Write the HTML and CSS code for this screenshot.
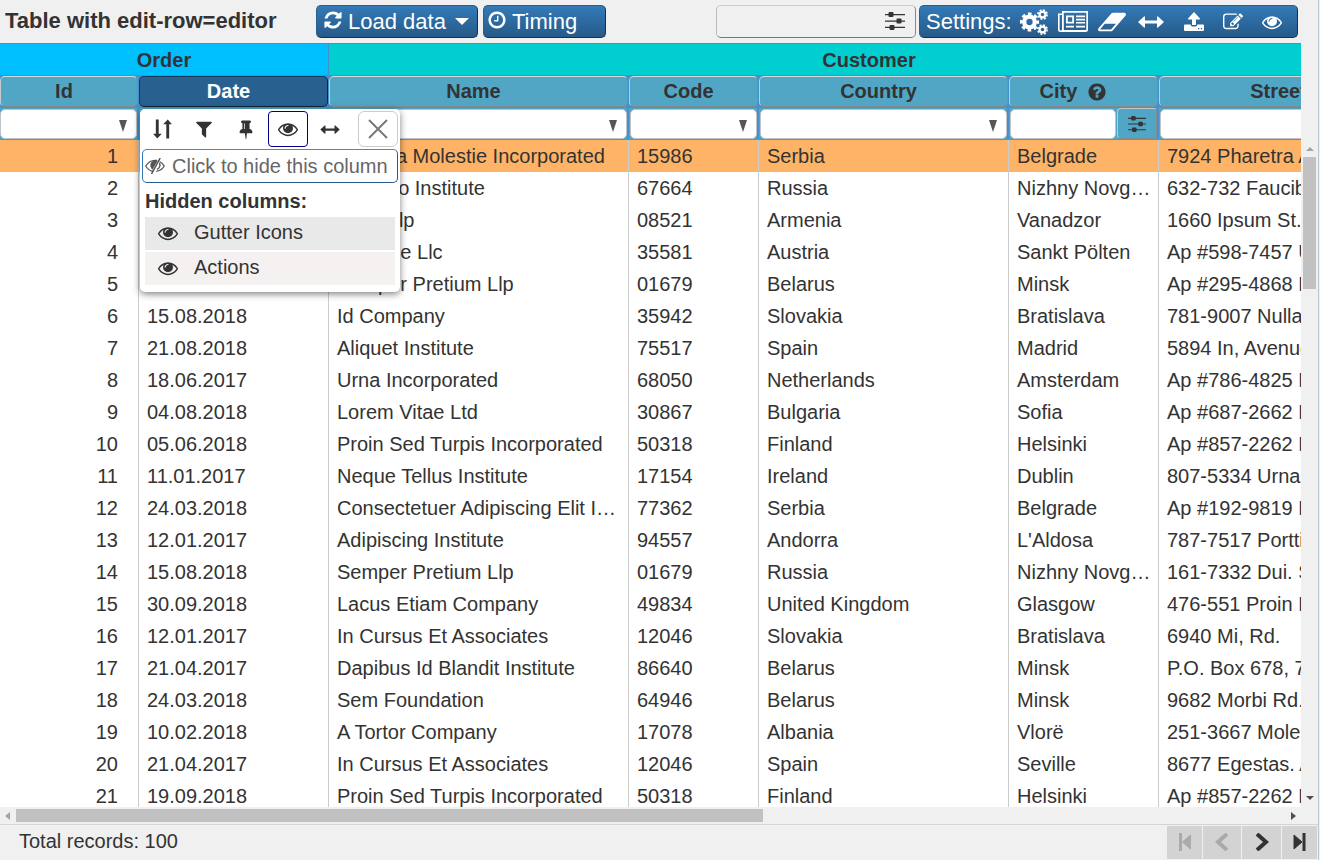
FILE: index.html
```html
<!DOCTYPE html>
<html lang="en">
<head>
<meta charset="utf-8">
<title>Table with edit-row=editor</title>
<link rel="stylesheet" href="styles.css">
</head>
<body>
<svg class="defs" aria-hidden="true">
  <symbol id="refresh" viewBox="0 0 1792 1792"><path d="M1639 1056q0 5-1 7-64 268-268 434.5t-478 166.5q-146 0-282.5-55t-243.5-157l-129 129q-19 19-45 19t-45-19-19-45v-448q0-26 19-45t45-19h448q26 0 45 19t19 45-19 45l-137 137q71 66 161 102t187 36q134 0 250-65t186-179q11-17 53-117 8-23 30-23h192q13 0 22.500 9.500t9.500 22.500zm25-800v448q0 26-19 45t-45 19h-448q-26 0-45-19t-19-45 19-45l138-138q-148-137-349-137-134 0-250 65t-186 179q-11 17-53 117-8 23-30 23h-199q-13 0-22.500-9.500t-9.500-22.500v-7q65-268 270-434.500t480-166.500q146 0 284 55.500t245 156.500l130-129q19-19 45-19t45 19 19 45z"/></symbol>
  <symbol id="clock" viewBox="0 0 1792 1792"><path d="M1024 544v448q0 14-9 23t-23 9h-320q-14 0-23-9t-9-23v-64q0-14 9-23t23-9h224v-352q0-14 9-23t23-9h64q14 0 23 9t9 23zm416 352q0-148-73-273t-198-198-273-73-273 73-198 198-73 273 73 273 198 198 273 73 273-73 198-198 73-273zm224 0q0 209-103 385.500t-279.500 279.500-385.500 103-385.500-103-279.500-279.500-103-385.500 103-385.500 279.500-279.500 385.500-103 385.500 103 279.500 279.500 103 385.500z"/></symbol>
  <symbol id="eye" viewBox="0 0 1792 1792"><path d="M1664 960q-152-236-381-353 61 104 61 225 0 185-131.500 316.500t-316.500 131.500-316.500-131.500-131.500-316.500q0-121 61-225-229 117-381 353 133 205 333.500 326.500t434.500 121.500 434.500-121.500 333.500-326.500zm-720-384q0-20-14-34t-34-14q-125 0-214.500 89.500t-89.500 214.500q0 20 14 34t34 14 34-14 14-34q0-86 61-147t147-61q20 0 34-14t14-34zm848 384q0 34-20 69-140 230-376.500 368.500t-499.500 138.500-499.500-139-376.500-368q-20-35-20-69t20-69q140-229 376.500-368t499.500-139 499.500 139 376.500 368q20 35 20 69z"/></symbol>
  <symbol id="edit" viewBox="0 0 1792 1792"><path d="M888 1184l116-116-152-152-116 116v56h96v96h56zm440-720q-16-16-33 1l-350 350q-17 17-1 33t33-1l350-350q17-17 1-33zm80 594v190q0 119-84.500 203.500t-203.500 84.500h-832q-119 0-203.500-84.500t-84.500-203.500v-832q0-119 84.500-203.500t203.500-84.500h832q63 0 117 25 15 7 18 23 3 17-9 29l-49 49q-14 14-32 8-23-6-45-6h-832q-66 0-113 47t-47 113v832q0 66 47 113t113 47h832q66 0 113-47t47-113v-126q0-13 9-22l64-64q15-15 35-7t20 29zm-96-738l288 288-672 672h-288v-288zm444 132l-92 92-288-288 92-92q28-28 68-28t68 28l152 152q28 28 28 68t-28 68z"/></symbol>
  <symbol id="eraser" viewBox="0 0 1920 1792"><path d="M896 1408l336-384h-768l-336 384h768zm1013-1077q15 34 9.500 71.500t-30.500 65.500l-896 1024q-38 44-96 44h-768q-38 0-69.500-20.500t-47.500-54.500q-15-34-9.500-71.500t30.500-65.500l896-1024q38-44 96-44h768q38 0 69.500 20.500t47.500 54.500z"/></symbol>
  <symbol id="filter" viewBox="0 0 1792 1792"><path d="M1595 295q17 41-14 70l-493 493v742q0 42-39 59-13 5-25 5-27 0-45-19l-256-256q-19-19-19-45v-486l-493-493q-31-29-14-70 17-39 59-39h1280q42 0 59 39z"/></symbol>
  <symbol id="pin" viewBox="0 0 1792 1792"><path d="M800 864v-448q0-14-9-23t-23-9-23 9-9 23v448q0 14 9 23t23 9 23-9 9-23zm672 352q0 26-19 45t-45 19h-429l-51 483q-2 12-10.500 20.500t-20.500 8.500h-1q-27 0-32-27l-76-485h-404q-26 0-45-19t-19-45q0-123 78.500-221.500t177.500-98.500v-512q-52 0-90-38t-38-90 38-90 90-38h640q52 0 90 38t38 90-38 90-90 38v512q99 0 177.500 98.500t78.500 221.500z"/></symbol>
  <symbol id="help" viewBox="0 0 1792 1792"><path d="M1024 1376v-192q0-14-9-23t-23-9h-192q-14 0-23 9t-9 23v192q0 14 9 23t23 9h192q14 0 23-9t9-23zm256-672q0-88-55.500-163t-138.500-116-170-41q-243 0-371 213-15 24 8 42l132 100q7 6 19 6 16 0 25-12 53-68 86-92 34-24 86-24 48 0 85.500 26t37.500 59q0 38-20 61t-68 45q-63 28-115.500 86.500t-52.500 125.500v36q0 14 9 23t23 9h192q14 0 23-9t9-23q0-19 21.500-49.500t54.500-49.500q32-18 49-28.500t46-35 44.500-48 28-60.500 12.500-81zm384 192q0 209-103 385.500t-279.500 279.500-385.500 103-385.500-103-279.500-279.500-103-385.500 103-385.500 279.500-279.500 385.500-103 385.500 103 279.500 279.500 103 385.500z"/></symbol>
  <symbol id="arrows" viewBox="0 0 26 12"><path d="M0 6l6-5.500q1-.5 1 .7v3.300h12v-3.300q0-1.200 1-.7l6 5.500-6 5.500q-1 .5-1-.7v-3.300h-12v3.300q0 1.200-1 .7z"/></symbol>
  <symbol id="cogs" viewBox="0 0 28 26">
    <g fill="none" stroke="currentColor"><circle cx="9.500" cy="13" r="5.300" stroke-width="4.300"/><circle cx="9.500" cy="13" r="8.300" stroke-width="2.600" stroke-dasharray="3.600 2.919" stroke-dashoffset="1.800"/>
    <circle cx="22.500" cy="5.500" r="2.900" stroke-width="2.200"/><circle cx="22.500" cy="5.500" r="4.600" stroke-width="1.600" stroke-dasharray="2 1.613"/>
    <circle cx="22.500" cy="20.500" r="2.900" stroke-width="2.200"/><circle cx="22.500" cy="20.500" r="4.600" stroke-width="1.600" stroke-dasharray="2 1.613"/></g>
  </symbol>
  <symbol id="news" viewBox="0 0 30 21"><path fill-rule="evenodd" d="M4 0h26v18.500q0 2.500-2.500 2.500h-25q-2.500 0-2.500-2.500v-16h4zM5.800 1.700v17.300h22.500v-17.300zM1.600 4v14.500q0 1 1.200 1t1.200-1v-14.500zM8 4.500h8v8h-8zM9.800 6.300v4.400h4.400v-4.400zM18 4.500h9v1.700h-9zM18 7.700h9v1.700h-9zM18 10.900h9v1.700h-9zM8 14.800h8v1.700h-8zM18 14.800h9v1.700h-9z"/></symbol>
  <symbol id="upload" viewBox="0 0 20 19"><path fill-rule="evenodd" d="M10 0l6 6.500q.5 1-.8 1h-3.200v5.500h-4v-5.500h-3.200q-1.300 0-.8-1zM1 12.500h5.700q0 2 1.800 2h3q1.800 0 1.800-2h5.700q1 0 1 1v4.500q0 1-1 1h-18q-1 0-1-1v-4.500q0-1 1-1zM14 16h1.300v1.300h-1.300zM16.800 16h1.300v1.300h-1.300z"/></symbol>
  <symbol id="sliders" viewBox="0 0 20 18"><path d="M0 2h20v1.300h-20zM0 8.400h20v1.300h-20zM0 14.800h20v1.300h-20z"/><rect x="3.500" y="0" width="5" height="5" rx="1"/><rect x="11.500" y="6.500" width="5" height="5" rx="1"/><rect x="4.500" y="13" width="5" height="5" rx="1"/></symbol>
  <symbol id="sort" viewBox="0 0 20 20"><path d="M3 0h3v15h3.300l-4.800 5-4.500-5h3zM14 20h3v-15h3l-4.500-5-4.800 5h3.300z"/></symbol>
  <symbol id="eye-slash" viewBox="0 0 20 16"><g fill="none" stroke="currentColor" stroke-width="1.300"><path d="M8 13.300q-4.500-.8-7.300-5.300 3.600-5.700 9.300-5.700l2 .2M14.500 3.500q3 1.500 4.800 4.500-3 4.800-8 5.400"/><path d="M15.200 0l-8.700 16" stroke-width="1.500"/><path d="M14.500 5q1.700 4-2.500 6.500"/></g><path d="M12.700 2.600q-4-1-6.200 1.300-2.500 3.300.2 7l.8.800z"/></symbol>
  <symbol id="close" viewBox="0 0 20 20"><path d="M1 1l18 18M19 1l-18 18" stroke="currentColor" stroke-width="1.900" fill="none"/></symbol>
</svg>

<div class="app">
  <header class="toolbar">
    <h1 class="title">Table with edit-row=editor</h1>
    <button class="btn load"><svg class="i20"><use href="#refresh"/></svg><span>Load data</span><i class="caret"></i></button>
    <button class="btn timing"><svg class="i20"><use href="#clock"/></svg><span>Timing</span></button>
    <div class="search"><svg class="sliders"><use href="#sliders"/></svg></div>
    <div class="btn settings"><span>Settings:</span>
      <span class="tool"><svg class="cogs"><use href="#cogs"/></svg></span>
      <span class="tool"><svg class="news"><use href="#news"/></svg></span>
      <span class="tool"><svg class="eraser"><use href="#eraser"/></svg></span>
      <span class="tool"><svg class="arrows"><use href="#arrows"/></svg></span>
      <span class="tool up"><svg class="upload"><use href="#upload"/></svg></span>
      <span class="tool"><svg class="i20"><use href="#edit"/></svg></span>
      <span class="tool"><svg class="i20"><use href="#eye"/></svg></span>
    </div>
  </header>

  <main class="main">
    <section class="grid">
      <div class="groups"><div class="group order">Order</div><div class="group customer">Customer</div></div>
      <div class="row heads">
        <div class="hcell"><b>Id</b></div><div class="hcell active"><b>Date</b></div><div class="hcell"><b>Name</b></div><div class="hcell"><b>Code</b></div><div class="hcell"><b>Country</b></div><div class="hcell"><b>City</b><svg class="help"><use href="#help"/></svg></div><div class="hcell"><b>Street</b></div>
      </div>
      <div class="row filters">
        <div class="fcell"><div class="input"><i class="tri"></i></div></div><div class="fcell"><div class="input"></div></div><div class="fcell"><div class="input"><i class="tri"></i></div></div><div class="fcell"><div class="input"><i class="tri"></i></div></div><div class="fcell"><div class="input"><i class="tri"></i></div></div><div class="fcell"><div class="input"></div><div class="fbtn"><svg><use href="#sliders"/></svg></div></div><div class="fcell"><div class="input"></div></div>
      </div>
      <div class="body" id="body"></div>
    </section>
    <div class="vscroll"><i class="au"></i><div class="vthumb"></div><i class="ad"></i></div>
  </main>
  <div class="hscroll"><i class="al"></i><div class="hthumb"></div><i class="ar"></i></div>
  <footer class="footer">
    <span>Total records: 100</span>
    <nav class="pager">
      <button class="page off"><svg viewBox="0 0 16 18"><path d="M3.500 0v18" stroke-width="3"/><path d="M13.500 2v14l-8-7z" class="fill"/></svg></button>
      <button class="page off"><svg viewBox="0 0 16 18"><path d="M13 1l-9 8 9 8" stroke-width="4"/></svg></button>
      <button class="page"><svg viewBox="0 0 16 18"><path d="M3 1l9 8-9 8" stroke-width="4"/></svg></button>
      <button class="page"><svg viewBox="0 0 16 18"><path d="M12 0v18" stroke-width="3"/><path d="M2 2v14l8-7z" class="fill"/></svg></button>
    </nav>
  </footer>

  <div class="menu">
    <div class="tabs">
      <span class="tab"><svg class="sort"><use href="#sort"/></svg></span>
      <span class="tab"><svg class="i20"><use href="#filter"/></svg></span>
      <span class="tab"><svg class="i20"><use href="#pin"/></svg></span>
      <span class="tab on"><svg class="i20"><use href="#eye"/></svg></span>
      <span class="tab"><svg class="harrow"><use href="#arrows"/></svg></span>
      <span class="tab x"><svg class="close"><use href="#close"/></svg></span>
    </div>
    <div class="hide"><svg><use href="#eye-slash"/></svg><span>Click to hide this column</span></div>
    <div class="caption">Hidden columns:</div>
    <div class="item dark"><svg class="i20"><use href="#eye"/></svg><span>Gutter Icons</span></div>
    <div class="item"><svg class="i20"><use href="#eye"/></svg><span>Actions</span></div>
  </div>
</div>
<script src="app.js"></script>
</body>
</html>
```
FILE: styles.css
```css
* { box-sizing: border-box; }
body { margin: 0; background: #f0f0f0; color: #333; font: 20px "Liberation Sans", Arial, sans-serif; overflow: hidden; }
button { font: inherit; margin: 0; }
svg { display: block; fill: currentColor; flex: none; }
.defs { position: absolute; width: 0; height: 0; }
.app { position: relative; width: 1319px; height: 860px; display: flex; flex-direction: column; border-right: 1px solid #b9c6cf; }

.toolbar { height: 43px; display: flex; padding: 5px 0 5px 5px; }
.title { margin: 0; width: 311px; font-size: 22px; line-height: 31px; white-space: nowrap; }
.btn { height: 33px; display: flex; align-items: center; color: #fff; font-size: 22px; line-height: 31px; border: 1px solid; border-color: #285f90 #14304a #14304a #285f90; border-radius: 5px; background: linear-gradient(#337ab7, #265a88); white-space: nowrap; }
.load { width: 162px; padding: 0 6px; }
.load span, .timing span { margin-left: 5px; }
.i20 { width: 20px; height: 20px; }
.btn > .i20 { margin-top: -3px; }
.caret { margin-left: 9px; border: 7px solid transparent; border-top: 7px solid #fff; border-bottom: 0; }
.timing { width: 123px; margin-left: 5px; padding: 0 3px; }
.search { margin-left: 110px; width: 200px; height: 33px; border: 1px solid; border-color: #ccc #888 #777 #bbb; border-radius: 5px; display: flex; align-items: center; justify-content: flex-end; padding: 0 10px 2px 0; }
.sliders { width: 20px; height: 18px; }
.settings { margin-left: 3px; width: 379px; padding-left: 6px; }
.settings > span:first-child { width: 88px; }
.tool { width: 39px; height: 31px; display: flex; align-items: center; justify-content: center; }
.tool.up { padding-left: 5px; width: 43px; }
.cogs { width: 28px; height: 26px; }
.news { width: 30px; height: 21px; }
.eraser { width: 28px; height: 26px; }
.arrows { width: 26px; height: 12px; }
.upload { width: 20px; height: 19px; margin-top: -1px; }

.main { height: 764px; display: flex; }
.grid { width: 1301px; overflow: hidden; background: #fff; }
.groups { display: flex; width: 1409px; height: 33px; border-top: 1px solid #4590cd; border-bottom: 1px solid #4590cd; font-weight: bold; text-align: center; line-height: 33px; }
.group { height: 31px; }
.order { width: 329px; background: #00bfff; border-right: 1px solid #4590cd; }
.customer { width: 1080px; background: #00ced1; }
.row { display: grid; grid-template-columns: 139px 190px 300px 130px 250px 150px 250px; width: 1409px; height: 32px; }
.heads { background: #4590cd; padding-bottom: 1px; }
.hcell { margin-right: 1px; height: 31px; background: #51a6c5; border: 1px solid; border-color: #d5dce0 #858c90 #858c90 #c5ccd0; border-radius: 5px; display: flex; justify-content: center; padding-right: 10px; line-height: 29px; }
.hcell.active { background: #286090; border-color: #183a58 #102538 #102538 #183a58; color: #fff; }
.help { width: 20px; height: 20px; margin: 5px 10px 0 10px; }
.filters { background: #51a6c5; border-bottom: 1px solid #3f9fc6; }
.fcell { display: flex; border-right: 2px solid #4590cd; }
.input { flex: 1; margin-top: 1px; height: 30px; background: #fff; border: 1px solid #bfc4c8; border-radius: 5px; padding: 10px 9px 0; display: flex; justify-content: flex-end; }
.fcell + .fcell .input { margin-left: 1px; }
.tri { width: 0; height: 0; border: 4.500px solid transparent; border-top: 12px solid #555; border-bottom: 0; }
.fbtn { width: 40px; margin-left: 1px; border: 1px solid; border-color: #c0c8cc #858c90 #858c90 #c0c8cc; border-radius: 4px; display: flex; align-items: center; justify-content: center; }
.fbtn svg { width: 18px; height: 16px; }
.body { height: 667px; overflow: hidden; }
.cell { border-right: 1px solid #ccc; padding: 0 5px 0 8px; line-height: 33px; white-space: nowrap; overflow: hidden; text-overflow: ellipsis; }
.cell:first-child { text-align: right; padding-right: 20px; }
.selected { background: #ffb366; }

.vscroll { width: 17px; padding: 97px 0 1px 2px; display: flex; flex-direction: column; }
.vthumb { width: 13px; height: 132px; margin-top: 6px; background: #c1c1c1; }
.vscroll i, .hscroll i { width: 0; height: 0; border: 4px solid transparent; flex: none; }
.vscroll .au { margin: 7px 0 0 3px; border-top: 0; border-bottom-color: #a3a3a3; }
.vscroll .ad { margin: auto 0 6px 3px; border-bottom: 0; border-top-color: #505050; }
.hscroll { height: 18px; border-bottom: 1px solid #d5d5d5; padding: 2px 22px 2px 5px; display: flex; align-items: center; }
.hthumb { width: 747px; height: 13px; margin-left: 6px; background: #c1c1c1; }
.hscroll .al { border-left: 0; border-right: 5px solid #a3a3a3; }
.hscroll .ar { border-right: 0; border-left: 5px solid #505050; margin-left: auto; }
.footer { height: 35px; display: flex; justify-content: space-between; padding: 1px 1px 0 19px; line-height: 31px; }
.pager { display: grid; grid-template-columns: 35px 38px 39px 35px; gap: 1px; }
.page { height: 33px; border: 0; padding: 0 0 2px; background: #d3d3d3; color: #333; display: flex; align-items: center; justify-content: center; }
.page svg { width: 16px; height: 18px; fill: none; stroke: currentColor; }
.page svg .fill { fill: currentColor; }
.off { color: #aaa; }

.menu { position: absolute; left: 140px; top: 109px; width: 260px; height: 183px; background: #fff; border-radius: 5px; padding: 2px; box-shadow: 0 2px 7px rgba(0,0,0,.5); }
.tabs { display: flex; height: 36px; }
.tab { width: 42px; height: 36px; display: flex; align-items: center; justify-content: center; }
.tab.on { width: 40px; border: 1px solid #000080; border-radius: 4px; }
.tab:nth-child(1) { width: 40px; }
.tab:nth-child(2) { width: 44px; }
.tab:nth-child(3) { width: 42px; padding-right: 2px; }
.tab:nth-child(5) { width: 44px; }
.tab.x { width: 40px; margin-left: 6px; border: 1px solid #ccc; border-radius: 6px; color: #777; }
.sort { width: 19px; height: 20px; }
.harrow { width: 20px; height: 9px; }
.close { width: 20px; height: 20px; }
.hide { height: 34px; margin-top: 2px; border: 1px solid; border-color: #3b8bd4 #265a88 #265a88 #337ab7; border-radius: 5px; display: flex; align-items: center; color: #666; padding-left: 2px; white-space: nowrap; }
.hide svg { width: 20px; height: 16px; margin-right: 7px; color: #555; }
.caption { font-weight: bold; line-height: 36px; height: 34px; padding-left: 3px; }
.item { height: 33px; margin: 0 3px 2px; padding-left: 13px; display: flex; line-height: 30px; background: #f5f1f1; }
.item.dark { background: #e9e9e9; }
.item svg { margin: 6px 16px 0 0; }
```
FILE: app.js
```javascript
const rows = `14.07.2018|Gravida Molestie Incorporated|15986|Serbia|Belgrade|7924 Pharetra Avenue
19.02.2018|Et Justo Institute|67664|Russia|Nizhny Novgorod|632-732 Faucibus Road
03.05.2017|Vitae Llp|08521|Armenia|Vanadzor|1660 Ipsum St.
20.11.2017|Quisque Llc|35581|Austria|Sankt Pölten|Ap #598-7457 Urna Road
15.08.2018|Semper Pretium Llp|01679|Belarus|Minsk|Ap #295-4868 Nunc Av.
15.08.2018|Id Company|35942|Slovakia|Bratislava|781-9007 Nulla Street
21.08.2018|Aliquet Institute|75517|Spain|Madrid|5894 In, Avenue
18.06.2017|Urna Incorporated|68050|Netherlands|Amsterdam|Ap #786-4825 Nec Road
04.08.2018|Lorem Vitae Ltd|30867|Bulgaria|Sofia|Ap #687-2662 Est Road
05.06.2018|Proin Sed Turpis Incorporated|50318|Finland|Helsinki|Ap #857-2262 Nunc Av.
11.01.2017|Neque Tellus Institute|17154|Ireland|Dublin|807-5334 Urna Road
24.03.2018|Consectetuer Adipiscing Elit Incorporated|77362|Serbia|Belgrade|Ap #192-9819 Duis Road
12.01.2017|Adipiscing Institute|94557|Andorra|L'Aldosa|787-7517 Porttitor Street
15.08.2018|Semper Pretium Llp|01679|Russia|Nizhny Novgorod|161-7332 Dui. St.
30.09.2018|Lacus Etiam Company|49834|United Kingdom|Glasgow|476-551 Proin Road
12.01.2017|In Cursus Et Associates|12046|Slovakia|Bratislava|6940 Mi, Rd.
21.04.2017|Dapibus Id Blandit Institute|86640|Belarus|Minsk|P.O. Box 678, 7624 Rd.
24.03.2018|Sem Foundation|64946|Belarus|Minsk|9682 Morbi Rd.
10.02.2018|A Tortor Company|17078|Albania|Vlorë|251-3667 Molestie St.
21.04.2017|In Cursus Et Associates|12046|Spain|Seville|8677 Egestas. Av.
19.09.2018|Proin Sed Turpis Incorporated|50318|Finland|Helsinki|Ap #857-2262 Nunc Av.`;

const body = document.getElementById('body');
rows.split('\n').forEach((line, index) => {
  const row = document.createElement('div');
  row.className = index === 0 ? 'row selected' : 'row';
  [index + 1, ...line.split('|')].forEach(value => {
    const cell = document.createElement('div');
    cell.className = 'cell';
    cell.textContent = value;
    row.append(cell);
  });
  body.append(row);
});
```
